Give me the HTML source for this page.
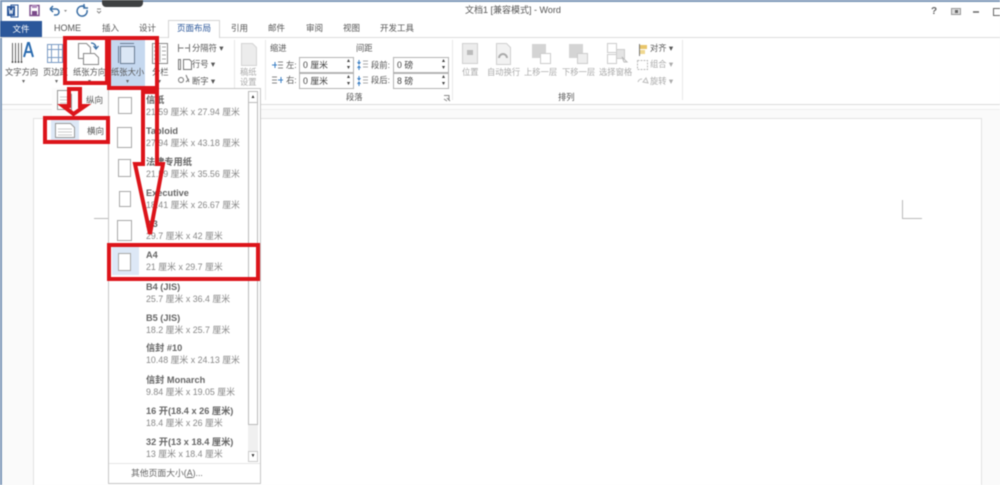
<!DOCTYPE html>
<html lang="zh"><head><meta charset="utf-8"><title>文档1 - Word</title>
<style>
html,body{margin:0;padding:0;background:#fdfdfd}
#r{position:relative;width:1000px;height:485px;overflow:hidden;background:#fafafa;font-family:"Liberation Sans","Noto Sans CJK SC",sans-serif;color:#555;font-size:8.3px;filter:blur(.45px)}
#r div,#r span.a{position:absolute;white-space:nowrap}
.t{line-height:12px}
.tab{top:22px;font-size:8.5px;line-height:13px;color:#555}
.g{color:#aaa}
.sp{border:1px solid #b4b4b4;background:#fff;height:14px;line-height:14px;padding-left:3px;font-size:8.8px;color:#444}
.ar{font-size:6px;line-height:7px;color:#444;right:3px;top:0}
.it b{position:absolute;left:0;top:0;font-size:9.2px;color:#666;line-height:12px;white-space:nowrap}
.it i{position:absolute;left:0;top:12px;font-style:normal;font-size:8.85px;color:#888;line-height:12px;white-space:nowrap}
.it{left:146px;width:100px;height:28px}
.pg{border:1px solid #a8a8a8;background:#fff;box-sizing:border-box}
.d{font-size:6px;color:#666;line-height:8px}
</style></head><body><div id="r">
<div style="left:0;top:0;width:1000px;height:2px;background:#7d98b8"></div>
<div style="left:0;top:0;width:2px;height:485px;background:#7d98b8"></div>
<div style="left:2px;top:2px;width:998px;height:102px;background:#fff"></div>
<div style="left:2px;top:105px;width:998px;height:4px;background:#fdfdfd"></div>
<div style="left:102px;top:0;width:41px;height:7px;background:#3f4142;border-radius:0 0 4px 4px"></div>

<!-- title bar -->
<svg style="position:absolute;left:0;top:0" width="110" height="22">
<rect x="11" y="5" width="7" height="12" fill="#fff" stroke="#2b579a"/><rect x="7" y="6" width="8" height="10" fill="#2b579a"/><path d="M9 8l1 6 1-4 1 4 1-6" stroke="#fff" fill="none" stroke-width=".8"/>
<rect x="30" y="5.500" width="9" height="10" fill="none" stroke="#7a4a8a" stroke-width="1.400"/><rect x="32" y="11" width="5" height="5" fill="#7a4a8a"/><rect x="32" y="5" width="5" height="3" fill="#b08abc"/>
<path d="M50 9h6a3 3 0 0 1 0 6h-2M50 9l3-3M50 9l3 3" fill="none" stroke="#3a6ea5" stroke-width="1.500"/><path d="M64 10h3l-1.500 2z" fill="#888"/>
<path d="M85 7a5 5 0 1 0 2 3M84 4v4h4" fill="none" stroke="#3a6ea5" stroke-width="1.500"/>
<path d="M97 9h4M97 11l2 2 2-2" fill="none" stroke="#888"/>
</svg>
<div class="t" style="left:465px;top:4px;font-size:9px;color:#555">文档1 [兼容模式] - Word</div>
<svg style="position:absolute;left:925px;top:3px" width="75" height="16">
<text x="6" y="11" font-size="10" font-weight="bold" fill="#666" font-family="Liberation Sans">?</text>
<rect x="26.500" y="5.500" width="9" height="6" fill="#ddd" stroke="#999"/><rect x="30" y="7" width="3" height="3" fill="#666"/>
<path d="M48 9h6" stroke="#666" stroke-width="1.500"/><rect x="68.500" y="5.500" width="9" height="7" fill="none" stroke="#666"/>
</svg>

<!-- tabs -->
<div style="left:0;top:21px;width:42px;height:17px;background:#2b579a;color:#fff;text-align:center;line-height:17px;font-size:8.5px">文件</div>
<div class="tab" style="left:54px;font-size:9px">HOME</div>
<div class="tab" style="left:102px">插入</div>
<div class="tab" style="left:139px">设计</div>
<div style="left:168px;top:20px;width:52px;height:18px;background:#fff;border:1px solid #d4d4d4;border-bottom:none;box-sizing:border-box"></div>
<div class="tab" style="left:177px;color:#2b579a">页面布局</div>
<div class="tab" style="left:231px">引用</div>
<div class="tab" style="left:268px">邮件</div>
<div class="tab" style="left:306px">审阅</div>
<div class="tab" style="left:343px">视图</div>
<div class="tab" style="left:380px">开发工具</div>
<div style="left:0;top:37px;width:168px;height:1px;background:#dcdcdc"></div>
<div style="left:220px;top:37px;width:780px;height:1px;background:#dcdcdc"></div>
<div style="left:2px;top:104px;width:998px;height:1px;background:#dcdcdc"></div>
<div style="left:2px;top:109px;width:998px;height:1px;background:#f0f0f0"></div>

<!-- highlight paper size -->
<div style="left:110px;top:40px;width:35px;height:48px;background:#c5d8ef"></div>

<!-- ribbon icons -->
<svg style="position:absolute;left:0;top:38px" width="260" height="50" fill="none">
<path d="M12.500 5v19M15.500 5v19M18.500 5v19M21.500 5v19" stroke="#666"/><circle cx="12.500" cy="24" r="1" fill="#555"/><circle cx="15.500" cy="24" r="1" fill="#555"/><circle cx="18.500" cy="24" r="1" fill="#555"/><circle cx="21.500" cy="24" r="1" fill="#555"/>
<path d="M24 19l4-14h1l4 14M25 14h7" stroke="#2b6cb0" stroke-width="2"/>
<rect x="47.500" y="6.500" width="15" height="18" stroke="#7b9cc4" fill="#fff"/><path d="M47.500 11.500h15M47.500 19.500h15M51.500 6.500v18M58.500 6.500v18" stroke="#7b9cc4"/>
<path d="M78.500 5.500h8l4 4v11h-12z" stroke="#888" fill="#fff"/><path d="M83.500 15.500h11l4 4v7h-15z" stroke="#888" fill="#fff"/><path d="M91 5c3 0 5 2 5 5M93.500 8l2.500 3 2.500-3" stroke="#3a6ea5" stroke-width="1.300"/>
<path d="M120.500 8.500h14v17h-14zM118.500 8v17M120 5.500h14" stroke="#6a7c93" fill="#dbe7f5"/>
<rect x="152.500" y="5.500" width="15" height="20" stroke="#888" fill="#fff"/><path d="M160 7v17M154 9h4M154 13h4M154 17h4M154 21h4M162 9h4M162 13h4M162 17h4M162 21h4" stroke="#aaa"/>
<path d="M178.500 6v8M189.500 6v8M178.500 10h5M185 10h4" stroke="#777"/>
<path d="M178.500 21.500h2v10h-2zM183.500 21.500h6l2 2v8h-8z" stroke="#777" fill="#fff"/>
<circle cx="181" cy="42" r="2.500" stroke="#777"/><path d="M186 37l3 7M186 44l3-3" stroke="#777"/>
<path d="M241.500 5.500h11l4 4v18h-15z" fill="#ececec" stroke="#d4d4d4"/>
</svg>
<div class="t" style="left:5px;top:66px">文字方向</div>
<div class="t" style="left:43px;top:66px">页边距</div>
<div class="t" style="left:73px;top:66px">纸张方向</div>
<div class="t" style="left:111px;top:66px">纸张大小</div>
<div class="t" style="left:152px;top:66px">分栏</div>
<div class="t" style="left:192px;top:42px">分隔符 ▾</div>
<div class="t" style="left:192px;top:58px">行号 ▾</div>
<div class="t" style="left:192px;top:75px">断字 ▾</div>
<div class="t g" style="left:240px;top:66px">稿纸</div>
<div class="t g" style="left:240px;top:76px">设置</div>
<div class="d" style="left:22px;top:78px">▾</div>
<div class="d" style="left:55px;top:78px">▾</div>
<div class="d" style="left:88px;top:78px">▾</div>
<div class="d" style="left:126px;top:78px">▾</div>
<div class="d" style="left:158px;top:78px">▾</div>
<div style="left:234px;top:40px;width:1px;height:60px;background:#e8e8e8"></div>
<div style="left:265px;top:40px;width:1px;height:60px;background:#e8e8e8"></div>
<div style="left:452px;top:40px;width:1px;height:60px;background:#e8e8e8"></div>
<div style="left:682px;top:40px;width:1px;height:60px;background:#e8e8e8"></div>

<!-- indent / spacing -->
<div class="t" style="left:270px;top:42px">缩进</div>
<div class="t" style="left:356px;top:42px">间距</div>
<svg style="position:absolute;left:271px;top:60px" width="14" height="26" fill="none"><path d="M1 5h5M4 2v6" stroke="#3a7fc4"/><path d="M7 2h5M7 5h5M7 8h5" stroke="#888"/><path d="M1 17h5M1 20h5M1 23h5" stroke="#888"/><path d="M7 20h5M10 17v6" stroke="#3a7fc4"/></svg>
<div class="t" style="left:286px;top:59px">左:</div>
<div class="t" style="left:286px;top:74px">右:</div>
<div class="sp" style="left:299px;top:57px;width:50px">0 厘米<span class="a ar">▴<br>▾</span></div>
<div class="sp" style="left:299px;top:73px;width:50px">0 厘米<span class="a ar">▴<br>▾</span></div>
<div class="t" style="left:371px;top:59px">段前:</div>
<div class="t" style="left:371px;top:74px">段后:</div>
<svg style="position:absolute;left:356px;top:58px" width="14" height="32" fill="none"><path d="M3 2v4M1.500 4l1.500 2 1.500-2M3 8v4M1.500 10l1.500-2 1.500 2M3 18v4M1.500 20l1.500 2 1.500-2M3 24v4M1.500 26l1.500-2 1.500 2" stroke="#3a7fc4"/><path d="M7 3h5M7 6h5M7 9h5M7 19h5M7 22h5M7 25h5" stroke="#aaa"/></svg>
<div class="sp" style="left:393px;top:57px;width:51px">0 磅<span class="a ar">▴<br>▾</span></div>
<div class="sp" style="left:393px;top:73px;width:51px">8 磅<span class="a ar">▴<br>▾</span></div>
<div class="t" style="left:346px;top:91px">段落</div>
<svg style="position:absolute;left:443px;top:94px" width="8" height="8" fill="none"><path d="M1 1.500h5v5M1 5l3 2M4 4l3 3" stroke="#888"/></svg>

<!-- arrange -->
<svg style="position:absolute;left:455px;top:40px" width="230" height="30" fill="none">
<rect x="7.500" y="3.500" width="15" height="20" fill="#ececec" stroke="#d0d0d0"/><rect x="12" y="10" width="6" height="5" fill="#bbb"/>
<path d="M41.500 3.500h10l4 4v17h-14z" fill="#f2f2f2" stroke="#d0d0d0"/><path d="M44 18a4 4 0 0 1 8 0" stroke="#aaa" stroke-width="2"/>
<rect x="77" y="4" width="14" height="14" fill="#d4d4d4"/><rect x="85.500" y="13.500" width="10" height="10" fill="#fff" stroke="#ccc"/>
<rect x="114" y="4" width="14" height="14" fill="#d4d4d4"/><rect x="122.500" y="13.500" width="10" height="10" fill="#eee" stroke="#ccc"/>
<rect x="152.500" y="3.500" width="9" height="9" fill="#fff" stroke="#ccc"/><rect x="152.500" y="14.500" width="9" height="9" fill="#fff" stroke="#ccc"/><rect x="161.500" y="9.500" width="8" height="9" fill="#e4e4e4" stroke="#ccc"/><path d="M167 17l5 5-3 0z" stroke="#bbb" fill="#fff"/>
</svg>
<div class="t g" style="left:462px;top:66px">位置</div>
<div class="t g" style="left:487px;top:66px">自动换行</div>
<div class="t g" style="left:524px;top:66px">上移一层</div>
<div class="t g" style="left:562px;top:66px">下移一层</div>
<div class="t g" style="left:599px;top:66px">选择窗格</div>
<div class="t" style="left:650px;top:42px">对齐 ▾</div>
<div class="t g" style="left:650px;top:58px">组合 ▾</div>
<div class="t g" style="left:650px;top:75px">旋转 ▾</div>
<div class="t" style="left:558px;top:91px">排列</div>
<svg style="position:absolute;left:636px;top:42px" width="14" height="48" fill="none"><path d="M3.500 2v12" stroke="#777"/><path d="M4 3h7v4H4z" fill="#e8c56a"/><path d="M4 8h5v4H4z" fill="#f0d890"/><rect x="1.500" y="18.500" width="10" height="9" stroke="#bbb" stroke-dasharray="2 1"/><path d="M2 40a4 4 0 0 1 4-3M7 40l3-4 2 5z" stroke="#bbb"/></svg>

<!-- page -->
<div style="left:33px;top:118px;width:949px;height:370px;background:#fff;border:1px solid #e2e2e2;box-sizing:border-box"></div>
<div style="left:94px;top:218px;width:15px;height:1px;background:#bbb"></div>
<div style="left:902px;top:200px;width:1px;height:19px;background:#bbb"></div>
<div style="left:902px;top:218px;width:20px;height:1px;background:#bbb"></div>

<!-- orientation menu -->
<div style="left:52px;top:88px;width:57px;height:29px;background:#fcfcfc"></div>
<svg style="position:absolute;left:57px;top:89px" width="16" height="22" fill="none"><path d="M.5 1.500h10l4 4v15H.5z" stroke="#999" fill="#fff"/><path d="M3 8h9M3 11h9M3 14h9" stroke="#ccc"/></svg>
<div class="t" style="left:86px;top:94px;font-size:8.5px">纵向</div>
<div style="left:51px;top:120px;width:28px;height:23px;background:#dde8f6"></div>
<svg style="position:absolute;left:54px;top:122px" width="24" height="18" fill="none"><path d="M1.500 1.500h15l4 4v10h-19z" stroke="#999" fill="#fff"/><path d="M4 7h14M4 10h14M4 13h14" stroke="#ccc"/></svg>
<div class="t" style="left:87px;top:125px;font-size:8.5px">横向</div>

<!-- paper size menu -->
<div style="left:108px;top:88px;width:153px;height:396px;background:#fff;border:1px solid #c6c6c6;box-sizing:border-box"></div>
<div style="left:112px;top:247px;width:27px;height:28px;background:#dde8f6"></div>
<div class="pg" style="left:118px;top:97px;width:14px;height:17px"></div>
<div class="pg" style="left:117px;top:127px;width:15px;height:21px"></div>
<div class="pg" style="left:118px;top:159px;width:13px;height:18px"></div>
<div class="pg" style="left:119px;top:191px;width:12px;height:16px"></div>
<div class="pg" style="left:117px;top:220px;width:15px;height:21px"></div>
<div class="pg" style="left:118px;top:253px;width:13px;height:18px"></div>
<div class="it" style="top:94px"><b>信纸</b><i>21.59 厘米 x 27.94 厘米</i></div>
<div class="it" style="top:125px"><b>Tabloid</b><i>27.94 厘米 x 43.18 厘米</i></div>
<div class="it" style="top:156px"><b>法律专用纸</b><i>21.59 厘米 x 35.56 厘米</i></div>
<div class="it" style="top:187px"><b>Executive</b><i>18.41 厘米 x 26.67 厘米</i></div>
<div class="it" style="top:218px"><b>A3</b><i>29.7 厘米 x 42 厘米</i></div>
<div class="it" style="top:249px"><b>A4</b><i>21 厘米 x 29.7 厘米</i></div>
<div class="it" style="top:281px"><b>B4 (JIS)</b><i>25.7 厘米 x 36.4 厘米</i></div>
<div class="it" style="top:312px"><b>B5 (JIS)</b><i>18.2 厘米 x 25.7 厘米</i></div>
<div class="it" style="top:342px"><b>信封 #10</b><i>10.48 厘米 x 24.13 厘米</i></div>
<div class="it" style="top:374px"><b>信封 Monarch</b><i>9.84 厘米 x 19.05 厘米</i></div>
<div class="it" style="top:405px"><b>16 开(18.4 x 26 厘米)</b><i>18.4 厘米 x 26 厘米</i></div>
<div class="it" style="top:436px"><b>32 开(13 x 18.4 厘米)</b><i>13 厘米 x 18.4 厘米</i></div>
<div style="left:109px;top:463px;width:151px;height:1px;background:#e6e6e6"></div>
<div class="t" style="left:131px;top:467px;font-size:8.8px;color:#666">其他页面大小(<u>A</u>)...</div>
<!-- scrollbar -->
<div style="left:248px;top:91px;width:10px;height:371px;background:#f0f0f0"></div>
<div style="left:248px;top:91px;width:10px;height:334px;background:#fff;border:1px solid #bbb;box-sizing:border-box"></div>
<div style="left:248px;top:91px;width:10px;height:12px;background:#fff;border:1px solid #bbb;box-sizing:border-box;font-size:5px;line-height:10px;text-align:center;color:#333">▲</div>
<div style="left:248px;top:451px;width:10px;height:11px;background:#fff;border:1px solid #ccc;box-sizing:border-box;font-size:5px;line-height:9px;text-align:center;color:#333">▼</div>

<!-- red annotations -->
<svg style="position:absolute;left:0;top:0" width="1000" height="485" fill="none" stroke="#dc141a" stroke-width="4">
<rect x="65" y="38" width="42" height="45"/>
<rect x="109" y="38" width="48" height="50"/>
<rect x="45" y="118" width="63" height="24"/>
<rect x="109" y="245" width="149" height="34"/>
<path d="M143 92V164H135L150 234L163 164H157V92Z"/>
<path d="M69 89H80V106H85L73.500 114L63 106H69Z"/>
</svg>
</div></body></html>
